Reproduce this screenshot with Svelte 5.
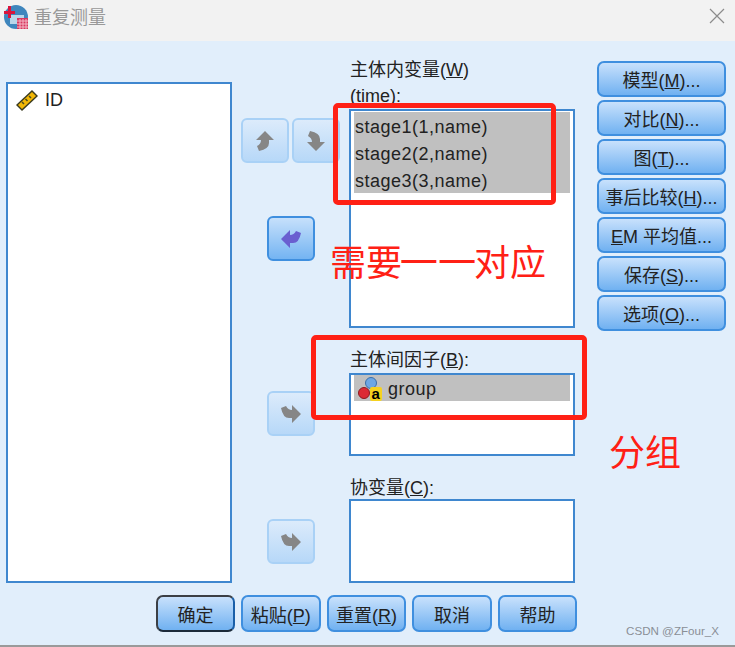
<script>
  const sideButtons = [
    { pre: '模型(', key: 'M', post: ')...' },
    { pre: '对比(', key: 'N', post: ')...' },
    { pre: '图(', key: 'T', post: ')...' },
    { pre: '事后比较(', key: 'H', post: ')...' },
    { pre: '', key: 'E', post: 'M 平均值...' },
    { pre: '保存(', key: 'S', post: ')...' },
    { pre: '选项(', key: 'O', post: ')...' }
  ];
  const footerButtons = [
    { pre: '确定', key: '', post: '', primary: true },
    { pre: '粘贴(', key: 'P', post: ')' },
    { pre: '重置(', key: 'R', post: ')' },
    { pre: '取消', key: '', post: '' },
    { pre: '帮助', key: '', post: '' }
  ];
  const stages = ['stage1(1,name)', 'stage2(2,name)', 'stage3(3,name)'];
  const arrow = 'M0 3 L5 1 Q7 5 11 5 V0 L20 9 L11 18 V13 H8 Q2 13 0 3Z';
</script>

{#snippet arrowIcon(transform, color)}
  <svg width="20" height="20" viewBox="0 0 20 18">
    <path d={arrow} {transform} fill={color} />
  </svg>
{/snippet}

<div class="dialog">
  <header class="titlebar">
    <svg class="logo" width="24" height="24" viewBox="0 0 24 24">
      <circle cx="12" cy="12" r="12" fill="#3f86bd" />
      <path d="M6 10h14v9H6z" fill="#b9d6ea" />
      <path d="M0 6h11v3H0zM4 1h3v12H4z" fill="#d9143c" />
      <path d="M13 13h11v11H13z" fill="#d8375f" />
      <path d="M13 16h11M13 19h11M13 22h11M16 14v10M19 14v10M22 14v10" stroke="#f4b6c6" stroke-width="1" />
    </svg>
    <span class="title">重复测量</span>
    <svg class="close" width="16" height="16" viewBox="0 0 16 16">
      <path d="M1 1L15 15M15 1L1 15" stroke="#8c8c8c" stroke-width="1.2" fill="none" />
    </svg>
  </header>

  <main class="body">
    <div class="panes">
      <div class="source box">
        <div class="source-item">
          <svg width="24" height="24" viewBox="0 0 24 24">
            <path d="M1 17L17 2L23 8L7 23Z" fill="#3a3a1e" />
            <path d="M3 17L17 4L21 8L7 21Z" fill="#f2b705" />
            <path d="M7 14l2 2M10.500 11l2 2M14 8l2 2" stroke="#4a4a20" stroke-width="1.500" />
          </svg>
          <span>ID</span>
        </div>
      </div>

      <div class="center">
        <section class="row first">
          <div class="arrows">
            <div class="pair">
              <button class="tool off">{@render arrowIcon('rotate(-90 10 9)', '#868686')}</button>
              <button class="tool off">{@render arrowIcon('matrix(0 1 1 0 1 -1)', '#868686')}</button>
            </div>
            <button class="tool on enter">{@render arrowIcon('matrix(-1 0 0 1 20 0)', '#6a5fd0')}</button>
          </div>
          <div class="field">
            <div class="label">主体内变量(<u>W</u>)</div>
            <div class="label sub">(time):</div>
            <div class="box list-within">
              {#each stages as s}
                <div class="picked">{s}</div>
              {/each}
            </div>
          </div>
        </section>

        <section class="row second">
          <div class="arrows">
            <button class="tool off single">{@render arrowIcon('', '#868686')}</button>
          </div>
          <div class="field">
            <div class="label">主体间因子(<u>B</u>):</div>
            <div class="box list-between">
              <div class="picked factor">
                <svg width="28" height="26" viewBox="0 0 28 26">
                  <circle cx="16" cy="7" r="5.500" fill="#6da7e4" stroke="#3a6ea8" />
                  <circle cx="9" cy="17" r="5.500" fill="#dc2b35" stroke="#8c1a20" />
                  <rect x="15" y="11" width="12" height="14" rx="2" fill="#f6d21e" />
                  <text x="21" y="23" class="glyph">a</text>
                </svg>
                <span>group</span>
              </div>
            </div>
          </div>
        </section>

        <section class="row third">
          <div class="arrows">
            <button class="tool off single">{@render arrowIcon('', '#868686')}</button>
          </div>
          <div class="field">
            <div class="label">协变量(<u>C</u>):</div>
            <div class="box list-covariate"></div>
          </div>
        </section>
      </div>

      <aside class="side">
        {#each sideButtons as b}
          <button class="action">{b.pre}<u>{b.key}</u>{b.post}</button>
        {/each}
      </aside>
    </div>

    <footer class="footer">
      {#each footerButtons as b}
        <button class="action wide" class:primary={b.primary}>{b.pre}{#if b.key}<u>{b.key}</u>{/if}{b.post}</button>
      {/each}
    </footer>
  </main>

  <!-- red markup drawn on top of the screenshot -->
  <div class="mark mark-a"></div>
  <div class="mark mark-b"></div>
  <div class="note note-a">需要<span class="one">一一</span>对应</div>
  <div class="note note-b">分组</div>
  <div class="watermark">CSDN @ZFour_X</div>
</div>

<style>
  :global(body) { margin: 0; }

  .dialog {
    position: relative;
    width: 735px;
    height: 647px;
    overflow: hidden;
    display: flex;
    flex-direction: column;
    background: #e1eefb;
    border-bottom: 2px solid #9a9a9a;
    box-sizing: border-box;
    font-family: "Liberation Sans", "Noto Sans CJK SC", sans-serif;
    font-size: 18px;
    color: #222;
  }

  .titlebar {
    height: 41px;
    flex: none;
    display: flex;
    align-items: center;
    padding: 0 10px 0 4px;
    box-sizing: border-box;
    background: #f2f2f2;
  }
  .logo { margin-right: 6px; margin-top: -7px; }
  .title { font-size: 18px; color: #999; margin-top: -9px; }
  .close { margin-left: auto; margin-top: -9px; }

  .body { flex: 1; padding: 0 0 0 6px; }
  .panes { display: flex; height: 542px; }

  .box {
    box-sizing: border-box;
    background: #fff;
    border: 2px solid #3f87cf;
  }

  .source {
    width: 226px;
    height: 501px;
    margin-top: 41px;
    padding: 2px 7px;
  }
  .source-item { display: flex; align-items: center; gap: 6px; height: 28px; }

  .center { width: 334px; margin-left: 9px; }
  .row { display: flex; }
  .arrows { width: 108px; flex: none; }
  .field { width: 226px; }
  .first { height: 289px; padding-top: 19px; box-sizing: border-box; }
  .second { height: 148px; }
  .third { height: 106px; }

  .label { height: 21px; line-height: 21px; white-space: nowrap; padding-left: 1px; }
  .sub { height: 28px; line-height: 31px; }
  .second .label { margin-top: 20px; margin-bottom: 2px; }
  .third .label { margin-top: 0; }

  .list-within { height: 219px; padding: 1px 3px 2px; }
  .list-between { height: 83px; padding: 0 3px 2px; }
  .list-covariate { height: 84px; }

  .picked {
    height: 27px;
    line-height: 30px;
    padding-left: 1px;
    background: #c0c0c0;
    white-space: nowrap;
    letter-spacing: 0.5px;
  }
  .factor { display: flex; align-items: center; gap: 5px; height: 26px; }
  .factor svg { margin-top: 2px; }
  .factor span { margin-top: 1px; }
  .glyph {
    font-family: "Liberation Sans", sans-serif;
    font-size: 15px;
    font-weight: 700;
    fill: #000;
    text-anchor: middle;
  }

  .tool {
    display: flex;
    align-items: center;
    justify-content: center;
    width: 48px;
    height: 45px;
    padding: 0;
    border-radius: 6px;
    box-sizing: border-box;
  }
  .off {
    border: 2px solid #a9d1f6;
    background: linear-gradient(#dcebfb, #b7d8f8);
  }
  .on {
    border: 2px solid #3f8fdf;
    background: linear-gradient(#c6e0fb, #74b4f2);
  }
  .pair { display: flex; gap: 3px; margin-top: 58px; }
  .enter { margin: 53px 0 0 26px; }
  .second .single { margin: 61px 0 0 26px; }
  .third .single { margin: 41px 0 0 26px; }

  .side {
    display: flex;
    flex-direction: column;
    gap: 3px;
    margin: 20px 0 0 22px;
  }

  .action {
    width: 129px;
    height: 36px;
    padding: 0;
    box-sizing: border-box;
    border: 2px solid #3f8fdf;
    border-radius: 7px;
    background: linear-gradient(#c8e1fc, #70b1f1);
    font: inherit;
    color: #222;
    white-space: nowrap;
  }

  .footer {
    display: flex;
    gap: 6px;
    margin: 12px 0 0 150px;
  }
  .wide { width: 79.6px; height: 37px; }
  .primary {
    width: 79px;
    border-color: #3b3f45 #1a5fa8 #1b2a3a #3b3f45;
  }

  .mark {
    position: absolute;
    box-sizing: border-box;
    border: 5px solid #ff2015;
    border-radius: 5px;
  }
  .mark-a { left: 333px; top: 103px; width: 223px; height: 102px; }
  .mark-b { left: 311px; top: 335px; width: 276px; height: 85px; }

  .note {
    position: absolute;
    font-family: "Noto Sans CJK SC", sans-serif;
    font-size: 36px;
    line-height: 40px;
    color: #ff2015;
    white-space: nowrap;
  }
  .one { display: inline-block; transform: scaleX(1.06); }
  .note-a { left: 330px; top: 240px; }
  .note-b { left: 609px; top: 430px; }

  .watermark {
    position: absolute;
    right: 16px;
    top: 624px;
    font-size: 11.6px;
    color: #8a8f96;
  }
</style>
